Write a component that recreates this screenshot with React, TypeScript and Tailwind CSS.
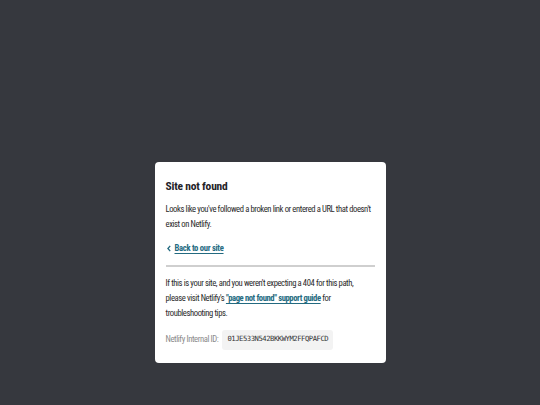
export default function App() {
  return (
    <div className="min-h-screen bg-[#36383e] flex justify-center pt-[162px] font-['Roboto_Condensed',sans-serif]">
      <div className="w-[231px] h-fit rounded-[4px] bg-white px-[11px] pt-[17px] pb-[13px] text-[#2a2a2a]">
        <h1 className="text-[11.5px] font-bold leading-[15px] tracking-[-0.2px] text-[#1f2328]">Site not found</h1>
        <p className="mt-2 text-[8.6px] leading-[15px] tracking-[-0.4px]">
          Looks like you've followed a broken link or entered a URL that doesn't
          <br />
          exist on Netlify.
        </p>
        <a
          href="#"
          className="mt-[9px] flex items-center gap-[4px] text-[8.6px] leading-[15px] tracking-[-0.3px] font-bold text-[#236a80]"
        >
          <svg width="4" height="7" viewBox="0 0 4 7" className="ml-[1px]">
            <path d="M3.2 0.8 L0.9 3.5 L3.2 6.2" fill="none" stroke="currentColor" strokeWidth="1.3" />
          </svg>
          <span className="underline underline-offset-[1.5px]">Back to our site</span>
        </a>
        <hr className="mt-[9px] border-0 h-[1.5px] bg-[#cfcfcf]" />
        <p className="mt-[9px] text-[8.6px] leading-[15px] tracking-[-0.4px]">
          If this is your site, and you weren't expecting a 404 for this path,
          <br />
          please visit Netlify's{" "}
          <a href="#" className="font-bold text-[#236a80] underline underline-offset-[1.5px]">
            "page not found" support guide
          </a>{" "}
          for
          <br />
          troubleshooting tips.
        </p>
        <div className="mt-[9px] flex items-center gap-[4px] text-[8.6px] tracking-[-0.4px]">
          <span className="text-[#8a8a8a]">Netlify Internal ID:</span>
          <code className="h-[20px] flex items-center rounded-[3px] bg-[#f3f3f3] px-[5px] font-['DejaVu_Sans_Mono',monospace] text-[7.2px] tracking-[-0.45px] text-[#333]">
            01JE533N542BKKWYM2FFQPAFCD
          </code>
        </div>
      </div>
    </div>
  );
}
